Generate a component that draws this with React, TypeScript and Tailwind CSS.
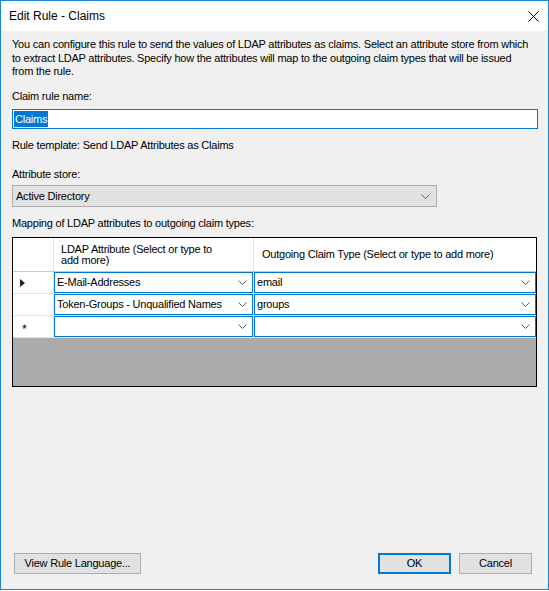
import React from 'react'

const font = { fontFamily: '"Liberation Sans", Arial, sans-serif' }

function Chevron() {
  return (
    <svg width="9" height="5" viewBox="0 0 9 5" className="shrink-0">
      <polyline points="0.5,0.5 4.5,4.5 8.5,0.5" fill="none" stroke="#606060" strokeWidth="1" />
    </svg>
  )
}

function Combo({ value }: { value: string }) {
  return (
    <div className="h-[21px] border border-[#0078d7] bg-white flex items-center justify-between pl-[2px] pr-[5px]">
      <span className="whitespace-nowrap">{value}</span>
      <Chevron />
    </div>
  )
}

function Row({ glyph, a, b }: { glyph?: 'arrow' | 'new'; a: string; b: string }) {
  return (
    <div className="flex h-[22px] border-b border-[#e3e3e3]">
      <div className="w-[41px] border-r border-[#e3e3e3] bg-white flex items-center">
        {glyph === 'arrow' && (
          <svg width="5" height="8" viewBox="0 0 5 8" className="ml-[7px]">
            <polygon points="0,0 5,4 0,8" fill="#222" />
          </svg>
        )}
        {glyph === 'new' && (
          <svg width="5" height="5" viewBox="0 0 5 5" className="ml-[9px]">
            <path d="M2.5 0 L3.2 1.6 L5 1.8 L3.6 3 L4 5 L2.5 4 L1 5 L1.4 3 L0 1.8 L1.8 1.6 Z" fill="#444" />
          </svg>
        )}
      </div>
      <div className="w-[200px] border-r border-[#e3e3e3]">
        <Combo value={a} />
      </div>
      <div className="flex-1">
        <Combo value={b} />
      </div>
    </div>
  )
}

export default function App() {
  return (
    <div className="w-[549px] h-[591px] bg-white text-black text-[11px] tracking-[-0.22px]" style={font}>
      <div className="w-[549px] h-[590px] border border-[#1883d7] bg-[#f0f0f0] flex flex-col">
        {/* title bar */}
        <div className="h-[30px] bg-white flex items-center justify-between pl-[8px] pr-[9px] shrink-0">
          <span className="text-[12px] tracking-normal">Edit Rule - Claims</span>
          <svg width="11" height="11" viewBox="0 0 11 11">
            <path d="M0.5 0.5 L10.5 10.5 M10.5 0.5 L0.5 10.5" stroke="#000" strokeWidth="1" />
          </svg>
        </div>

        <div className="px-[11px] pt-[7px] flex flex-col">
          <p className="leading-[13.5px] whitespace-nowrap">
            You can configure this rule to send the values of LDAP attributes as claims. Select an attribute store from which
            <br />
            to extract LDAP attributes. Specify how the attributes will map to the outgoing claim types that will be issued
            <br />
            from the rule.
          </p>

          <div className="mt-[11.5px] leading-[13.5px]">Claim rule name:</div>
          <div className="mt-[5.5px] h-[20px] w-[526px] border border-[#0078d7] bg-white flex items-center pl-[1px]">
            <span className="bg-[#0078d7] text-white leading-[16px] px-[1px]">Claims</span>
          </div>

          <div className="mt-[10px] leading-[13.5px]">Rule template: Send LDAP Attributes as Claims</div>

          <div className="mt-[15px] leading-[13.5px]">Attribute store:</div>
          <div className="mt-[4px] h-[22px] w-[425px] border border-[#adadad] bg-[#e1e1e1] flex items-center justify-between pl-[3px] pr-[6px]">
            <span>Active Directory</span>
            <Chevron />
          </div>

          <div className="mt-[10px] leading-[13.5px]">Mapping of LDAP attributes to outgoing claim types:</div>

          {/* grid */}
          <div className="mt-[6.5px] h-[150px] w-[525px] border border-black bg-[#ababab] flex flex-col">
            <div className="flex h-[34px] border-b border-[#c8c8c8] bg-white">
              <div className="w-[41px] border-r border-[#e3e3e3]" />
              <div className="w-[200px] border-r border-[#e3e3e3] flex items-center pl-[7px] leading-[11px]">
                <span className="whitespace-nowrap">
                  LDAP Attribute (Select or type to
                  <br />
                  add more)
                </span>
              </div>
              <div className="flex-1 flex items-center pl-[8px] whitespace-nowrap">Outgoing Claim Type (Select or type to add more)</div>
            </div>
            <Row glyph="arrow" a="E-Mail-Addresses" b="email" />
            <Row a="Token-Groups - Unqualified Names" b="groups" />
            <Row glyph="new" a="" b="" />
          </div>

          {/* footer */}
          <div className="mt-[166px] flex items-center">
            <button className="ml-[2px] w-[127px] h-[21px] border border-[#adadad] bg-[#e1e1e1]">
              View Rule Language...
            </button>
            <div className="flex-1" />
            <button className="w-[73px] h-[21px] border-2 border-[#0078d7] bg-[#e1e1e1]">OK</button>
            <button className="ml-[8px] mr-[5px] w-[73px] h-[21px] border border-[#adadad] bg-[#e1e1e1]">Cancel</button>
          </div>
        </div>
      </div>
    </div>
  )
}
